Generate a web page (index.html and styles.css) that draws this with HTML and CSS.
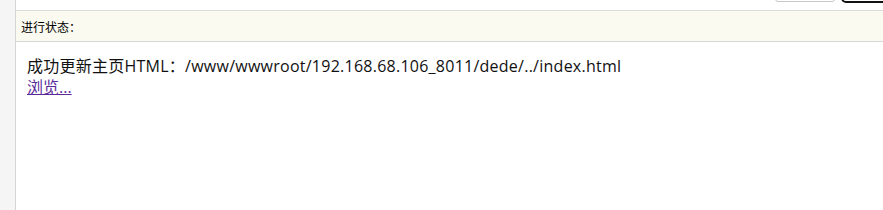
FILE: index.html
```html
<!DOCTYPE html>
<html lang="zh-CN">
<head>
  <meta charset="UTF-8" />
  <title>进行状态</title>
  <link rel="stylesheet" href="styles.css">
</head>
<body>
  <div class="side"></div>
  <div class="main">
    <div class="toolbar">
      <span class="btn"></span>
      <span class="btn btn-dark"></span>
    </div>
    <div class="panel-head">进行状态：</div>
    <div class="panel-body">
      <div class="msg">成功更新主页HTML：/www/wwwroot/192.168.68.106_8011/dede/../index.html</div>
      <a class="view" href="#">浏览...</a>
    </div>
  </div>
</body>
</html>
```

FILE: styles.css
```css
* {
  box-sizing: border-box;
  margin: 0;
  padding: 0;
}
html, body {
  height: 100%;
}
body {
  display: flex;
  font-family: "Noto Sans CJK SC", sans-serif;
  background: #fff;
  color: #000;
}
.side {
  width: 16px;
  background: #f5f5f5;
  border-right: 1px solid #d4d4d4;
}
.main {
  flex: 1;
}
.toolbar {
  height: 11px;
  overflow: hidden;
  display: flex;
  justify-content: flex-end;
  align-items: flex-end;
  gap: 6px;
  border-bottom: 1px solid #dcdcdc;
}
.btn {
  display: block;
  height: 26px;
  width: 60px;
  margin-bottom: 8px;
  border: 1px solid #c8c8c8;
  border-radius: 3px;
  background: #fff;
}
.btn-dark {
  margin-right: -18px;
  margin-bottom: 7px;
  border: 2px solid #111;
  border-radius: 5px;
}
.panel-head {
  height: 31px;
  line-height: 31px;
  padding-left: 5px;
  font-size: 12px;
  background: #fafaf0;
  border-bottom: 1px solid #d8d8d8;
}
.panel-body {
  padding: 14px 11px;
  font-family: "Open Sans", "Noto Sans CJK SC", sans-serif;
  font-size: 16px;
  line-height: 21px;
}
.msg {
  color: #111;
  letter-spacing: 0.25px;
}
.view {
  color: #5b2b9b;
}
```
